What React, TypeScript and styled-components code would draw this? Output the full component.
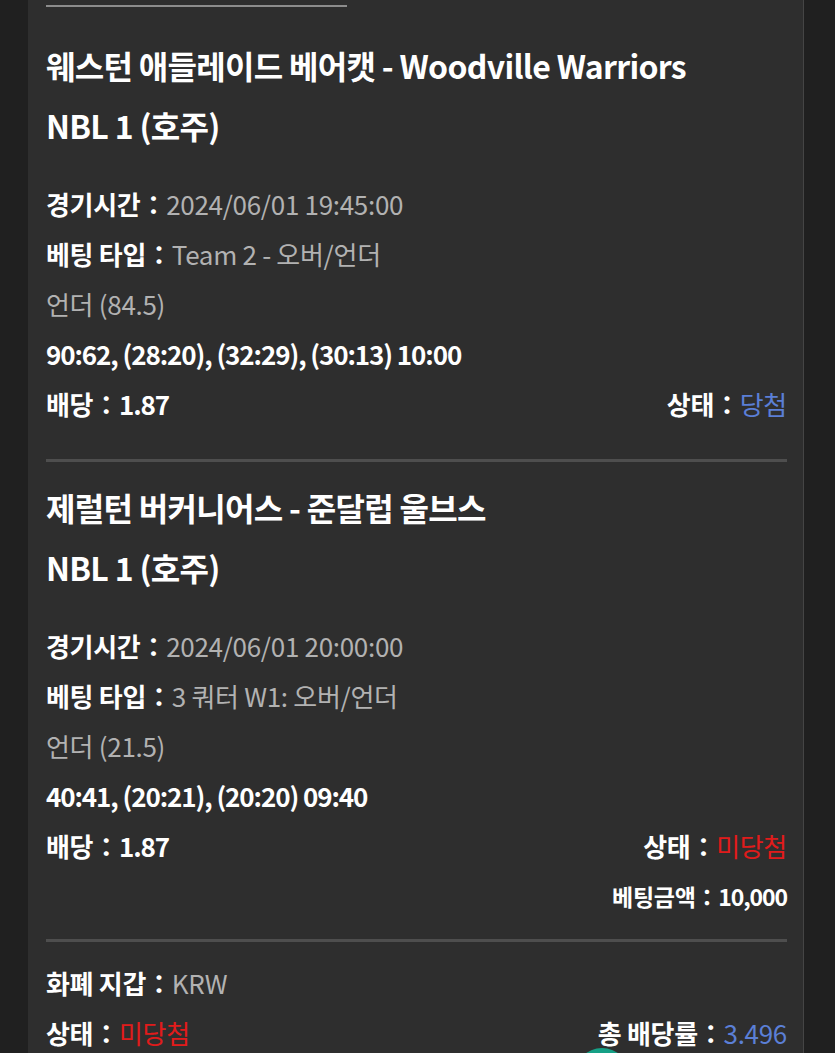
import React from "react";
import styled, { createGlobalStyle } from "styled-components";

const GlobalStyle = createGlobalStyle`
  html, body {
    margin: 0;
    padding: 0;
    background: #202020;
    overflow: hidden;
  }
  body {
    font-family: "Noto Sans CJK KR", "Noto Sans", sans-serif;
  }
`;

type Tone = "plain" | "win" | "lose";

interface Row {
  label?: string;
  value: string;
  tone?: Tone;
  strong?: boolean;
  small?: boolean;
  right?: { label: string; value: string; tone?: Tone; strong?: boolean };
}

interface Match {
  title: string;
  league: string;
  rows: Row[];
  tail: number;
}

const matches: Match[] = [
  {
    title: "웨스턴 애들레이드 베어캣 - Woodville Warriors",
    league: "NBL 1 (호주)",
    tail: 30,
    rows: [
      { label: "경기시간", value: "2024/06/01 19:45:00" },
      { label: "베팅 타입", value: "Team 2 - 오버/언더" },
      { value: "언더 (84.5)" },
      { value: "90:62, (28:20), (32:29), (30:13) 10:00", strong: true },
      {
        label: "배당",
        value: "1.87",
        strong: true,
        right: { label: "상태", value: "당첨", tone: "win" },
      },
    ],
  },
  {
    title: "제럴턴 버커니어스 - 준달럽 울브스",
    league: "NBL 1 (호주)",
    tail: 18,
    rows: [
      { label: "경기시간", value: "2024/06/01 20:00:00" },
      { label: "베팅 타입", value: "3 쿼터 W1: 오버/언더" },
      { value: "언더 (21.5)" },
      { value: "40:41, (20:21), (20:20) 09:40", strong: true },
      {
        label: "배당",
        value: "1.87",
        strong: true,
        right: { label: "상태", value: "미당첨", tone: "lose" },
      },
      {
        value: "",
        small: true,
        right: { label: "베팅금액", value: "10,000", strong: true },
      },
    ],
  },
];

const toneColor = (tone?: Tone, strong?: boolean) => {
  if (tone === "win") return "#5b7fd6";
  if (tone === "lose") return "#e11b1b";
  return strong ? "#ffffff" : "#b2b2b2";
};

const Panel = styled.div`
  margin-left: 28px;
  width: 776px;
  min-height: 1053px;
  box-sizing: border-box;
  padding: 5px 16px 0 18px;
  background: #2e2e2e;
  border-right: 1px solid #454545;
  color: #fff;
`;

const TopRule = styled.div`
  width: 301px;
  height: 2px;
  background: #8c8c8c;
`;

const Section = styled.section<{ $first?: boolean }>`
  padding-top: ${(p) => (p.$first ? 28 : 15)}px;
`;

const Title = styled.h2`
  margin: 0;
  font-size: 32px;
  font-weight: 700;
  line-height: 60px;
  letter-spacing: -0.7px;
  white-space: nowrap;
`;

const Rows = styled.div`
  margin-top: 23px;
  display: flex;
  flex-direction: column;
`;

const Line = styled.div<{ $small?: boolean }>`
  display: flex;
  justify-content: space-between;
  align-items: center;
  height: 50.2px;
  font-size: ${(p) => (p.$small ? 23 : 26)}px;
  letter-spacing: -0.3px;
  white-space: nowrap;
`;

const Pair = styled.span`
  display: inline-flex;
  align-items: center;
`;

const Label = styled.span`
  font-weight: 700;
  color: #fff;
`;

const Value = styled.span<{ $tone?: Tone; $strong?: boolean }>`
  font-weight: ${(p) => (p.$strong ? 700 : 400)};
  letter-spacing: ${(p) => (p.$strong ? "-1.1px" : "-0.3px")};
  color: ${(p) => toneColor(p.$tone, p.$strong)};
`;

const Separator = styled.hr<{ $gap: number }>`
  margin: ${(p) => p.$gap}px 0 0;
  border: 0;
  height: 3px;
  background: #4e4e4e;
`;

const Fab = styled.div`
  position: fixed;
  left: 574px;
  top: 1048px;
  width: 56px;
  height: 56px;
  border-radius: 50%;
  background: #16a086;
`;

function Field({
  label,
  value,
  tone,
  strong,
}: {
  label?: string;
  value: string;
  tone?: Tone;
  strong?: boolean;
}) {
  return (
    <Pair>
      {label && <Label>{label}：</Label>}
      <Value $tone={tone} $strong={strong}>
        {value}
      </Value>
    </Pair>
  );
}

export default function App() {
  return (
    <>
      <GlobalStyle />
      <Panel>
        <TopRule />
        {matches.map((m, i) => (
          <Section key={i} $first={i === 0}>
            <Title>{m.title}</Title>
            <Title>{m.league}</Title>
            <Rows>
              {m.rows.map((r, j) => (
                <Line key={j} $small={r.small}>
                  <Field label={r.label} value={r.value} tone={r.tone} strong={r.strong} />
                  {r.right && (
                    <Field
                      label={r.right.label}
                      value={r.right.value}
                      tone={r.right.tone}
                      strong={r.right.strong}
                    />
                  )}
                </Line>
              ))}
            </Rows>
            <Separator $gap={m.tail} />
          </Section>
        ))}
        <Section>
          <Line>
            <Field label="화폐 지갑" value="KRW" />
          </Line>
          <Line>
            <Field label="상태" value="미당첨" tone="lose" />
            <Field label="총 배당률" value="3.496" tone="win" />
          </Line>
        </Section>
      </Panel>
      <Fab />
    </>
  );
}
